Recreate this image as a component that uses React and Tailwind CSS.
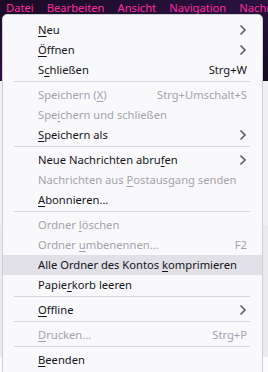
const items = [
  { t: ["", "N", "eu"], sub: true },
  { t: ["", "Ö", "ffnen"], sub: true },
  { t: ["S", "c", "hließen"], key: "Strg+W" },
  "sep",
  { t: ["Speichern (", "X", ")"], key: "Strg+Umschalt+S", off: true },
  { t: ["Spe", "i", "chern und schließen"], off: true },
  { t: ["", "S", "peichern als"], sub: true },
  "sep",
  { t: ["Neue Nachrichten abru", "f", "en"], sub: true },
  { t: ["Nachrichten aus ", "P", "ostausgang senden"], off: true },
  { t: ["", "A", "bonnieren…"] },
  "sep",
  { t: ["Ordner ", "l", "öschen"], off: true },
  { t: ["Ordner ", "u", "mbenennen…"], key: "F2", off: true },
  { t: ["Alle Ordner des Kontos ", "k", "omprimieren"], hover: true },
  { t: ["Papie", "r", "korb leeren"] },
  "sep",
  { t: ["", "O", "ffline"], sub: true },
  "sep",
  { t: ["", "D", "rucken…"], key: "Strg+P", off: true },
  "sep",
  { t: ["", "B", "eenden"] },
];

const Chevron = () => (
  <svg width="8" height="12" viewBox="0 0 8 12" fill="none">
    <path d="M1.5 1.5 L6 6 L1.5 10.5" stroke="#5b5b66" strokeWidth="1.6" />
  </svg>
);

const bar = [
  ["", "D", "atei"],
  ["", "B", "earbeiten"],
  ["", "A", "nsicht"],
  ["Na", "v", "igation"],
  ["", "N", "achr"],
];

export default function App() {
  return (
    <div
      className="relative w-[268px] h-[372px] overflow-hidden bg-[#fbfbfe] text-[11.2px]"
      style={{ fontFamily: "'Noto Sans', sans-serif" }}
    >
      <div className="h-[81px] bg-gradient-to-br from-[#1a0a26] via-[#2a1240] to-[#140a22]">
        <div className="flex gap-[13px] pl-[6px] h-[16px] items-center text-[#ff2a9c] whitespace-nowrap leading-none">
          {bar.map((b, i) => (
            <span key={i}>
              {b[0]}
              <span className="underline underline-offset-2">{b[1]}</span>
              {b[2]}
            </span>
          ))}
        </div>
      </div>
      <div className="h-[144px] bg-[#f0f0f4]" />
      <div className="h-[132px] bg-[#ebebef]" />

      <div className="absolute left-[2px] top-[14px] w-[261px] bg-[#f9f9fb] border border-[#cfcfd8] rounded-[5px] py-[5px] text-[#15141a]">
        {items.map((it, i) =>
          it === "sep" ? (
            <div key={i} className="h-px bg-[#d6d6dd] ml-[11px] mr-[12px] mt-[1px] mb-[3px]" />
          ) : (
            <div
              key={i}
              className={`flex items-center h-[20px] pl-[35px] pr-[15px] whitespace-nowrap ${
                it.hover ? "bg-[#e0e0e6]" : ""
              } ${it.off ? "text-[#a3a3ab]" : ""}`}
            >
              <span className="flex-1">
                {it.t[0]}
                <span className="underline underline-offset-2">{it.t[1]}</span>
                {it.t[2]}
              </span>
              {it.key && <span>{it.key}</span>}
              {it.sub && <Chevron />}
            </div>
          )
        )}
      </div>
    </div>
  );
}
